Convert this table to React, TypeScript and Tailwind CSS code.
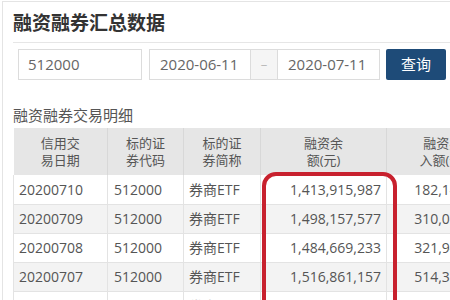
const rows = [
  { date: "20200710", code: "512000", name: "券商ETF", balance: "1,413,915,987", buy: "182,144,558", alt: false },
  { date: "20200709", code: "512000", name: "券商ETF", balance: "1,498,157,577", buy: "310,015,602", alt: true },
  { date: "20200708", code: "512000", name: "券商ETF", balance: "1,484,669,233", buy: "321,942,198", alt: false },
  { date: "20200707", code: "512000", name: "券商ETF", balance: "1,516,861,157", buy: "514,372,650", alt: true },
  { date: "20200706", code: "512000", name: "券商ETF", balance: "1,523,408,116", buy: "402,118,390", alt: false },
];

const App = () => {
  return (
    <div className="relative w-[450px] h-[300px] overflow-hidden bg-white font-['Open_Sans','Noto_Sans_CJK_SC',sans-serif]">
      <div className="ml-[2px] mt-[1px] h-[320px] border-l border-t border-[#e4e4e4] pl-[10px] pt-[10px]">
        <h1 className="text-[19px] leading-[22px] font-bold text-[#333]">融资融券汇总数据</h1>
        <div className="mt-[8px] border-t border-[#e6e6e6]" />

        <div className="mt-[6px] ml-[5px] flex items-center">
          <div className="w-[124px] h-[31px] border border-[#dcdcdc] flex items-center pl-[9px] text-[15px] text-[#666]">
            512000
          </div>
          <div className="ml-[7px] w-[102px] h-[31px] border border-[#dcdcdc] flex items-center pl-[10px] text-[15px] text-[#666]">
            2020-06-11
          </div>
          <div className="w-[26px] h-[31px] border-y border-[#dcdcdc] bg-[#f5f5f5] flex items-center justify-center text-[13px] text-[#bbb]">
            –
          </div>
          <div className="w-[103px] h-[31px] border border-[#dcdcdc] flex items-center pl-[10px] text-[15px] text-[#666]">
            2020-07-11
          </div>
          <button className="ml-[6px] w-[60px] h-[31px] rounded-[2px] bg-[#1e4b78] text-white text-[15px]">
            查询
          </button>
        </div>

        <h2 className="mt-[26px] text-[15px] leading-[18px] text-[#555]">融资融券交易明细</h2>

        <div className="mt-[4px] w-[500px]">
          <table className="table-fixed border-collapse text-[#555]">
            <colgroup>
              <col className="w-[94px]" />
              <col className="w-[76px]" />
              <col className="w-[77px]" />
              <col className="w-[126px]" />
              <col className="w-[112px]" />
            </colgroup>
            <thead>
              <tr className="h-[47px] bg-[#e6e6e6] text-[13px] leading-[17px]">
                <th className="font-normal border-r border-[#d8d8d8]">信用交<br />易日期</th>
                <th className="font-normal border-r border-[#d8d8d8]">标的证<br />券代码</th>
                <th className="font-normal border-r border-[#d8d8d8]">标的证<br />券简称</th>
                <th className="font-normal border-r border-[#d8d8d8]">融资余<br />额(元)</th>
                <th className="font-normal">融资买<br />入额(元)</th>
              </tr>
            </thead>
            <tbody>
              {rows.map((r, i) => (
                <tr
                  key={r.date}
                  className={`h-[29px] text-[14px] border-b border-[#e3e3e3] ${r.alt ? "bg-[#f3f3f3]" : "bg-white"} ${i === 4 ? "text-[#d8d8d8]" : ""}`}
                >
                  <td className="pl-[5px] border-l border-r border-[#e3e3e3]">{r.date}</td>
                  <td className="pl-[6px] border-r border-[#e3e3e3]">{r.code}</td>
                  <td className="pl-[5px] border-r border-[#e3e3e3]">{r.name}</td>
                  <td className="pr-[5px] text-right border-r border-[#e3e3e3]">{r.balance}</td>
                  <td className="pr-[5px] text-right">{r.buy}</td>
                </tr>
              ))}
            </tbody>
          </table>
        </div>
      </div>

      <div className="absolute left-[262px] top-[172px] w-[135px] h-[170px] rounded-[14px] border-[4px] border-[#c8212e]" />
    </div>
  );
};

export default App;
